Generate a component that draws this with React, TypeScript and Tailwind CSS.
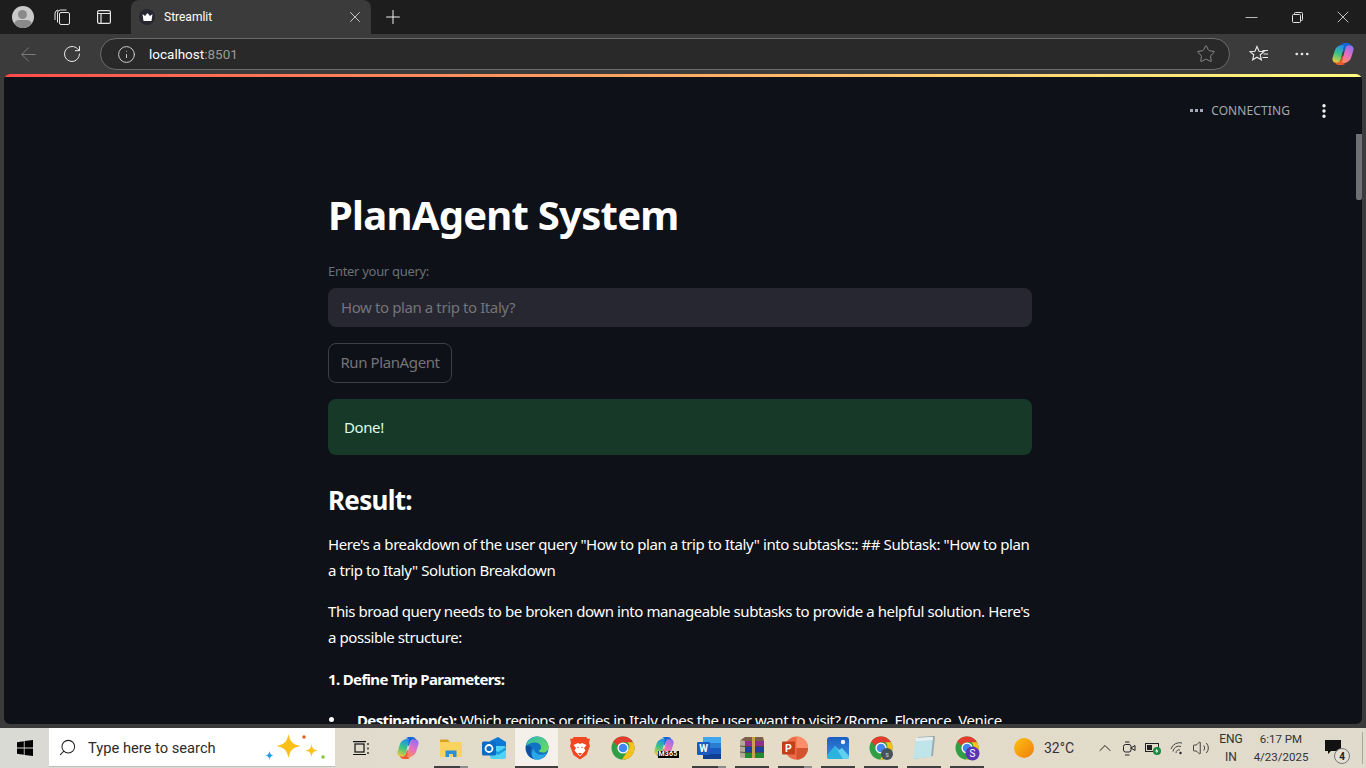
import { Info, RotateCw, ArrowLeft, Star, Plus, X, Minus, MoreHorizontal, MoreVertical, Search, ChevronUp, Volume2 } from 'lucide-react';

const sans = "font-['Noto_Sans',sans-serif]";

function ChromeIcon({ badge }: { badge?: 'gray' | 'purple' }) {
  return (
    <svg width="26" height="26" viewBox="-1 -1 26 26">
      <circle cx="12" cy="12" r="11.5" fill="#2f9e44" />
      <path d="M12 .5A11.5 11.5 0 0 1 22 6.3H12A5.8 5.8 0 0 0 6.6 10L2.3 5.6A11.500 11.500 0 0 1 12 .5Z" fill="#e33b2e" />
      <path d="M22 6.3A11.5 11.5 0 0 1 11 23.5L16.6 15A5.8 5.8 0 0 0 16.4 6.3Z" fill="#fbc116" />
      <circle cx="12" cy="12" r="5.6" fill="#fff" />
      <circle cx="12" cy="12" r="4.3" fill="#3f85f4" />
      {badge === 'gray' && (
        <>
          <circle cx="18" cy="18" r="6" fill="#46535c" />
          <text x="18" y="20.5" fontSize="7" fill="#d6d6d6" textAnchor="middle" fontFamily="Roboto, sans-serif">s</text>
        </>
      )}
      {badge === 'purple' && (
        <>
          <circle cx="17.500" cy="17.500" r="7" fill="#5b34b5" />
          <text x="17.500" y="21" fontSize="10" fill="#fff" textAnchor="middle" fontFamily="Roboto, sans-serif">S</text>
        </>
      )}
    </svg>
  );
}

function CopilotIcon({ size = 24 }: { size?: number }) {
  return (
    <svg width={size} height={size} viewBox="0 0 24 24">
      <defs>
        <linearGradient id="cpa" x1="0.6" y1="0" x2="0.3" y2="1">
          <stop offset="0" stopColor="#1f8fea" />
          <stop offset="0.5" stopColor="#3cc584" />
          <stop offset="1" stopColor="#f0c93a" />
        </linearGradient>
        <linearGradient id="cpb" x1="0.7" y1="0" x2="0.3" y2="1">
          <stop offset="0" stopColor="#8f6ff0" />
          <stop offset="0.55" stopColor="#e86fc0" />
          <stop offset="1" stopColor="#fb8a5c" />
        </linearGradient>
      </defs>
      <path d="M8.500 3.500C10 2.500 13 3 14 4c-1 1-1.300 2-1.700 3.500L9.500 18c-.5 2-1.500 3-3.500 3C3 21 1 19 1.500 16L4 8c.8-2.500 2.500-3.500 4.500-4.500Z" fill="url(#cpa)" />
      <path d="M15.500 20.500C14 21.500 11 21 10 20c1-1 1.300-2 1.700-3.500L14.500 6c.5-2 1.500-3 3.500-3 3 0 5 2 4.500 5L20 16c-.8 2.500-2.500 3.500-4.500 4.500Z" fill="url(#cpb)" />
      <path d="M9.500 2.500C10.500 1.500 12 1 14 1h2c2.500 0 4 1.500 4 3-1.500-1-3.500-1-4.500 0-1 1-1.500 2.500-2 4.500l-1.500 2c0-3 .5-5 1-6.500-1-1.500-2.500-2-4-1.500Z" fill="#1565d8" />
      <path d="M14.500 21.500c-1 1-2.500 1.500-4.500 1.500H8c-2.500 0-4-1.500-4-3 1.500 1 3.500 1 4.500 0 1-1 1.500-2.500 2-4.500l1.500-2c0 3-.5 5-1 6.500 1 1.500 2.500 2 4 1.500Z" fill="#ef5a2e" />
    </svg>
  );
}

function ExplorerIcon() {
  return (
    <svg width="24" height="24" viewBox="0 0 24 24">
      <path d="M1 4.500a1 1 0 0 1 1-1h7l2 3H1Z" fill="#d9a21b" />
      <rect x="1" y="6" width="22" height="15" rx="1" fill="#fbd35f" />
      <path d="M6.500 21v-6.500h11V21h-3.500v-3h-4v3Z" fill="#2b8fd8" />
    </svg>
  );
}

function OutlookIcon() {
  return (
    <svg width="24" height="24" viewBox="0 0 24 24">
      <path d="M8 5l8-4 8 5v5H8Z" fill="#0f78d4" />
      <rect x="8" y="10" width="16" height="13" rx="2" fill="#4fd3f5" />
      <path d="M8 11l8 5 8-5v3l-8 5-8-5Z" fill="#1b9de2" />
      <rect x="0" y="5.500" width="14" height="14" rx="1.500" fill="#0a6cc4" />
      <circle cx="7" cy="12.500" r="3.500" fill="none" stroke="#fff" strokeWidth="1.800" />
    </svg>
  );
}

function EdgeIcon() {
  return (
    <svg width="24" height="24" viewBox="0 0 24 24">
      <defs>
        <linearGradient id="edg" x1="0" y1="0" x2="1" y2="1">
          <stop offset="0" stopColor="#2fb8b0" />
          <stop offset="1" stopColor="#6fdc5b" />
        </linearGradient>
      </defs>
      <circle cx="12" cy="12" r="11.500" fill="#1273c4" />
      <path d="M1 10C2.500 4 7 .5 12 .5c6.500 0 11.500 5 11.500 10.500 0 3.500-2.500 5.500-5.500 5.500-2 0-4-.8-4.500-2 2-.5 3-2 2.500-4C15.500 7.500 12 6 9 6.500 5 7 2 8.500 1 10Z" fill="url(#edg)" />
      <path d="M9 12.500c0 3.500 3 6 6.500 6.200 2.500.2 4.500-.5 6-1.800-2 4-5.500 6.600-9.500 6.600-1.500 0-3-.5-3.500-1-2-2-2.500-6.500.5-10Z" fill="#2ba9e6" />
      <path d="M1 10C.5 16 3 21 8.500 22.500 5.500 20 5 15 7 11.500 5 9.500 2 9.500 1 10Z" fill="#0f4fa0" />
    </svg>
  );
}

function BraveIcon() {
  return (
    <svg width="22" height="24" viewBox="0 0 22 24">
      <path d="M5 1h12l2 2 2-.5L20 7l1 3-3.500 9L11 23.500 4.500 19 1 10l1-3L1 2.500 3 3Z" fill="#f1461f" />
      <path d="M4.500 9L9 7l2 1 2-1 4.500 2-2.500 3 1.500 2.500L11 20.500 5.500 14.500 7 12Z" fill="#fff" />
      <path d="M8 10.500l2 1-1 1ZM14 10.500l-2 1 1 1ZM9 17h4l-2 2.500Z" fill="#f1461f" />
    </svg>
  );
}

function M365Icon() {
  return (
    <div className="relative w-[26px] h-[24px]">
      <CopilotIcon size={22} />
      <span className="absolute right-0 top-[15px] bg-black text-white text-[7px] leading-[7px] font-['Roboto',sans-serif] font-bold px-[1px] tracking-[0.2px]">M365</span>
    </div>
  );
}

function WordIcon() {
  return (
    <svg width="24" height="24" viewBox="0 0 24 24">
      <rect x="6" y="1" width="18" height="22" rx="1.500" fill="#2b7cd3" />
      <rect x="6" y="1" width="18" height="6" fill="#41a5ee" />
      <rect x="6" y="12" width="18" height="6" fill="#185abd" />
      <rect x="6" y="18" width="18" height="5" fill="#103f91" />
      <rect x="0" y="6" width="13" height="13" rx="1" fill="#1a5cbe" />
      <text x="6.500" y="16" fontSize="10" fontWeight="700" fill="#fff" textAnchor="middle" fontFamily="Roboto, sans-serif">W</text>
    </svg>
  );
}

function RarIcon() {
  return (
    <svg width="24" height="24" viewBox="0 0 24 24">
      <path d="M0 4.500L5 1h18l1 4H5Z" fill="#7d5f49" />
      <path d="M5 5h19v5H5Z" fill="#8f2f8c" />
      <path d="M5 11h19v5H5Z" fill="#1f3f9e" />
      <path d="M5 17h19v5H5Z" fill="#1e8a32" />
      <path d="M0 4.500L5 5v5l-5-.5ZM0 10.500l5 .5v5l-5-.5ZM0 16.500l5 .5v5l-5-.5Z" fill="#b3aa98" />
      <path d="M0 10l5 .5h19M0 16l5 .5h19" stroke="#222" strokeWidth=".8" fill="none" />
      <rect x="12" y="1" width="3" height="21" fill="#c9a24f" />
    </svg>
  );
}

function PowerPointIcon() {
  return (
    <svg width="26" height="24" viewBox="0 0 26 24">
      <circle cx="14.500" cy="12" r="11.500" fill="#ed6c47" />
      <path d="M14.500.5A11.500 11.500 0 0 1 26 12H14.500Z" fill="#ff8f6b" />
      <path d="M14.500 12H26a11.500 11.500 0 0 1-11.500 11.500Z" fill="#d35230" />
      <rect x="0" y="5.500" width="13" height="13" rx="1" fill="#c43e1c" />
      <text x="6.500" y="15.500" fontSize="10.500" fontWeight="700" fill="#fff" textAnchor="middle" fontFamily="Roboto, sans-serif">P</text>
    </svg>
  );
}

function PhotosIcon() {
  return (
    <svg width="24" height="24" viewBox="0 0 24 24">
      <defs>
        <linearGradient id="pho" x1="0" y1="0" x2="0" y2="1">
          <stop offset="0" stopColor="#1a5fc0" />
          <stop offset="1" stopColor="#3a8fe6" />
        </linearGradient>
      </defs>
      <rect x="1" y="1" width="22" height="22" rx="3" fill="url(#pho)" />
      <circle cx="17" cy="6" r="2.200" fill="#f3f0ff" />
      <path d="M1 20l8-10 4 4 3-2 7 8v1a2 2 0 0 1-2 2H3a2 2 0 0 1-2-2Z" fill="#5fd0ee" />
      <path d="M9 10l8 13H3a2 2 0 0 1-2-2v-1Z" fill="#2bb3e0" />
    </svg>
  );
}

function NotepadIcon() {
  return (
    <svg width="26" height="26" viewBox="0 0 26 26">
      <path d="M7 2l17-1-2 20-19 3Z" fill="#9aa9ac" />
      <path d="M5 3l17-1-2 20-18 2Z" fill="#bfe4ea" />
      <path d="M5 3l17-1-.3 3-17 1Z" fill="#e9eff0" />
    </svg>
  );
}

function StartIcon() {
  return (
    <svg width="16" height="16" viewBox="0 0 16 16" fill="#000">
      <path d="M0 2.200 6.800 1.200v6.400H0ZM7.600 1.100 16 0v7.600H7.600ZM0 8.400h6.800v6.400L0 13.800ZM7.600 8.400H16V16l-8.400-1.100Z" />
    </svg>
  );
}

function Sparkles() {
  return (
    <svg width="62" height="30" viewBox="0 0 62 30">
      <path d="M24.500 2c1.500 7.500 4 10.500 12 12-8 1.500-10.500 4.500-12 12-1.500-7.500-4-10.500-12-12 8-1.500 10.500-4.500 12-12Z" fill="#fbbf1a" />
      <path d="M47.500 12c.8 4.500 1.800 5.500 6 6.500-4.200 1-5.200 2-6 6.500-.8-4.500-1.800-5.500-6-6.500 4.200-1 5.200-2 6-6.500Z" fill="#fcc21f" />
      <path d="M5.500 19c.5 3 1.300 3.800 4 4.500-2.700.7-3.500 1.500-4 4.500-.5-3-1.300-3.800-4-4.500 2.700-.7 3.500-1.500 4-4.500Z" fill="#2a9be8" />
      <circle cx="40" cy="5" r="1.800" fill="#e8622c" />
      <circle cx="59" cy="25" r="1.800" fill="#86c83c" />
    </svg>
  );
}

const apps = [
  { key: 'copilot', icon: <CopilotIcon /> },
  { key: 'explorer', icon: <ExplorerIcon />, bar: true, stack: true },
  { key: 'outlook', icon: <OutlookIcon /> },
  { key: 'edge', icon: <EdgeIcon />, active: true },
  { key: 'brave', icon: <BraveIcon /> },
  { key: 'chrome', icon: <ChromeIcon /> },
  { key: 'm365', icon: <M365Icon /> },
  { key: 'word', icon: <WordIcon />, bar: true, stack: true },
  { key: 'rar', icon: <RarIcon />, bar: true },
  { key: 'ppt', icon: <PowerPointIcon />, bar: true, stack: true },
  { key: 'photos', icon: <PhotosIcon />, bar: true },
  { key: 'chrome-s', icon: <ChromeIcon badge="gray" />, bar: true },
  { key: 'notepad', icon: <NotepadIcon />, bar: true },
  { key: 'chrome-p', icon: <ChromeIcon badge="purple" />, bar: true },
];

function BrowserChrome() {
  return (
    <>
      <div className="h-[34px] bg-[#1d1d1d] flex items-end shrink-0">
        <div className="w-[44px] h-full flex items-center justify-center pl-[1px]">
          <div className="w-[22px] h-[22px] rounded-full bg-[#c9c9c9] overflow-hidden flex flex-col items-center">
            <div className="w-[9px] h-[9px] rounded-full bg-[#8a8a8a] mt-[4px] shrink-0" />
            <div className="w-[18px] h-[10px] rounded-full bg-[#8a8a8a] mt-[1px] shrink-0" />
          </div>
        </div>
        <div className="w-[36px] h-full flex items-center justify-center">
          <svg width="16" height="16" viewBox="0 0 16 16" fill="none" stroke="#e6e6e6" strokeWidth="1">
            <rect x="5.500" y="3.500" width="10" height="12" rx="1.500" />
            <path d="M3.500 13.500V4a3 3 0 0 1 3-3h6M1 11V4a4 4 0 0 1 3-3" />
          </svg>
        </div>
        <div className="w-[48px] h-full flex items-center justify-center">
          <svg width="14" height="14" viewBox="0 0 14 14" fill="none" stroke="#e6e6e6" strokeWidth="1.200">
            <rect x=".6" y=".6" width="12.800" height="12.800" rx="1.500" />
            <path d="M.6 3.500h12.800M4 3.500v9.900" />
          </svg>
        </div>
        <div className="w-[240px] h-[34px] mt-auto ml-[3px] bg-[#3b3b3b] rounded-t-[8px] flex items-center pl-[8px] pr-[7px]">
          <div className="w-[16px] h-[16px] rounded-full bg-[#262730] flex items-center justify-center shrink-0">
            <svg width="11" height="8" viewBox="0 0 10 8" fill="#fff">
              <path d="M0 1l2.500 2L5 0l2.500 3L10 1 9 8H1Z" />
            </svg>
          </div>
          <span className="ml-[9px] text-[12px] text-white font-['Roboto',sans-serif] flex-1">Streamlit</span>
          <X size={18} color="#e5e5e5" strokeWidth={1.100} />
        </div>
        <div className="w-[36px] h-full flex items-center justify-center ml-[4px]">
          <Plus size={22} color="#f0f0f0" strokeWidth={1.100} />
        </div>
        <div className="flex-1" />
        <div className="w-[46px] h-full flex items-center justify-center"><Minus size={19} color="#e5e5e5" strokeWidth={1} /></div>
        <div className="w-[46px] h-full flex items-center justify-center">
          <svg width="11" height="11" viewBox="0 0 11 11" fill="none" stroke="#e5e5e5">
            <rect x=".5" y="2.500" width="8" height="8" rx="1" />
            <path d="M2.500 2.500V1.500a1 1 0 0 1 1-1h6a1 1 0 0 1 1 1v6a1 1 0 0 1-1 1H8.500" />
          </svg>
        </div>
        <div className="w-[46px] h-full flex items-center justify-center"><X size={20} color="#e5e5e5" strokeWidth={1} /></div>
      </div>
      <div className="h-[40px] bg-[#3b3b3b] flex items-center shrink-0">
        <div className="w-[56px] flex justify-center"><ArrowLeft size={23} color="#7d7d7d" strokeWidth={1} /></div>
        <div className="w-[32px] flex justify-center"><RotateCw size={20} color="#e8e8e8" strokeWidth={1.200} /></div>
        <div className="ml-[12px] w-[1130px] h-[32px] rounded-full bg-[#292929] border border-[#6b6b6b] flex items-center pl-[16px] pr-[13px]">
          <Info size={19} color="#e2e2e2" strokeWidth={1.100} />
          <span className="ml-[13px] text-[13.5px] font-['Roboto',sans-serif] text-white flex-1">
            localhost<span className="text-[#9b9b9b]">:8501</span>
          </span>
          <Star size={20} color="#8f8f8f" strokeWidth={1.100} />
        </div>
        <div className="ml-[19px] w-[20px] flex justify-center">
          <svg width="20" height="18" viewBox="0 0 20 18" fill="none" stroke="#ececec" strokeWidth="1.100">
            <path d="M8 1.500l2 4.700 5 .4-3.800 3.200 1.200 5L8 12.200 3.600 14.800l1.200-5L1 6.600l5-.4Z" />
            <path d="M13.500 5.500H19M14.500 9H19M13.500 12.500H19" />
          </svg>
        </div>
        <div className="ml-[23px] w-[20px] flex justify-center"><MoreHorizontal size={18} color="#ececec" strokeWidth={1.600} /></div>
        <div className="ml-[19px] w-[24px] flex justify-center"><CopilotIcon size={24} /></div>
      </div>
    </>
  );
}

function StreamlitPage() {
  return (
    <div className={`flex-1 min-h-0 bg-[#3b3b3b] px-[4px] pb-[4px] ${sans}`}>
      <div className="h-full bg-[#0e1117] rounded-[6px] overflow-hidden relative">
        <div className="h-[3px] bg-gradient-to-r from-[#ff4b4b] to-[#fffd80]" />
        <div className="h-[67px] flex items-center justify-end pr-[29px]">
          <div className="flex gap-[2px]">
            <div className="w-[3px] h-[3px] bg-[#a3a8b4]" />
            <div className="w-[3px] h-[3px] bg-[#a3a8b4]" />
            <div className="w-[3px] h-[3px] bg-[#a3a8b4]" />
          </div>
          <span className="ml-[8px] text-[12px] tracking-[0.1px] text-[#a3a8b4]">CONNECTING</span>
          <MoreVertical size={18} color="#fafafa" strokeWidth={2.500} className="ml-[25px]" />
        </div>
        <div className="w-[704px] ml-[324px] text-white">
          <h1 className="text-[40px] leading-[54px] font-bold tracking-[-0.75px] mt-[44px]">PlanAgent System</h1>
          <div className="text-[13px] leading-[18px] text-[#6d6f76] mt-[20px] tracking-[-0.3px]">Enter your query:</div>
          <div className="mt-[8px] h-[39px] bg-[#262730] rounded-[8px] flex items-center px-[13px] text-[15px] tracking-[-0.4px] text-[#737479]">How to plan a trip to Italy?</div>
          <div className="mt-[16px] h-[40px] w-[124px] border border-[#3d3f47] rounded-[8px] flex items-center justify-center pb-[2px] text-[15px] tracking-[-0.4px] text-[#737479]">Run PlanAgent</div>
          <div className="mt-[16px] h-[56px] bg-[#173928] rounded-[8px] flex items-center px-[16px] text-[15px] tracking-[-0.4px] text-[#dffde9]">Done!</div>
          <h3 className="mt-[27px] text-[26px] leading-[36px] font-bold tracking-[-0.7px]">Result:</h3>
          <p className="mt-[13px] text-[15px] leading-[26px] tracking-[-0.42px]">Here's a breakdown of the user query "How to plan a trip to Italy" into subtasks:: ## Subtask: "How to plan a trip to Italy" Solution Breakdown</p>
          <p className="mt-[15px] text-[15px] leading-[26px] tracking-[-0.42px]">This broad query needs to be broken down into manageable subtasks to provide a helpful solution. Here's a possible structure:</p>
          <p className="mt-[16px] text-[15px] leading-[26px] tracking-[-0.65px] font-bold">1. Define Trip Parameters:</p>
          <ul className="mt-[15px] text-[15px] leading-[26px] tracking-[-0.42px]">
            <li className="flex">
              <span className="w-[29px] shrink-0 pt-[10px] pl-[1px]"><span className="block w-[5px] h-[5px] rounded-full bg-white" /></span>
              <span><b className="tracking-[-0.65px]">Destination(s):</b> Which regions or cities in Italy does the user want to visit? (Rome, Florence, Venice,</span>
            </li>
          </ul>
        </div>
        <div className="absolute right-0 top-[60px] w-[6px] h-[66px] rounded-b-[2px] bg-[#6e7075]" />
      </div>
    </div>
  );
}

function Taskbar() {
  return (
    <div className="h-[40px] shrink-0 bg-gradient-to-r from-[#d9dad4] via-[#e6dcc6] to-[#dfdbcd] flex items-stretch font-['Roboto',sans-serif] text-[#1c1c1c]">
      <div className="w-[49px] shrink-0 flex items-center justify-center"><StartIcon /></div>
      <div className="w-[286px] h-[39px] shrink-0 bg-white border-b border-[#bdbdbd] flex items-center pl-[9px] pr-[9px]">
        <Search size={19} color="#222" strokeWidth={1.300} className="-scale-x-100" />
        <span className="ml-[11px] mt-[3px] text-[14.7px] text-[#2c2c2c] flex-1">Type here to search</span>
        <Sparkles />
      </div>
      <div className="w-[51px] shrink-0 flex items-center justify-center">
        <svg width="16" height="15" viewBox="0 0 16 15" fill="none" stroke="#111" strokeWidth="1.200">
          <rect x="2" y="3" width="9" height="8" />
          <path d="M0 .7h13M0 13.500h13" />
          <path d="M15 2v2M15 6.500v2M15 11v2" />
        </svg>
      </div>
      {apps.map((app) => (
        <div key={app.key} className={`relative w-[43px] shrink-0 flex items-center justify-center ${app.active ? 'bg-[#f5f1ea]' : ''}`}>
          {app.icon}
          {app.active && <div className="absolute bottom-0 left-0 w-full h-[2px] bg-[#3f3f3f]" />}
          {app.bar && (
            <div className="absolute bottom-0 left-[5px] w-[34px] h-[2px] flex">
              <div className="flex-1 bg-[#3f3f3f]" />
              {app.stack && <div className="w-[8px] bg-[#8c8c8c]" />}
            </div>
          )}
        </div>
      ))}
      <div className="ml-[24px] w-[24px] shrink-0 flex items-center justify-center">
        <div className="w-[20px] h-[20px] rounded-full bg-gradient-to-br from-[#fcc10f] to-[#ee7c0e]" />
      </div>
      <span className="ml-[8px] self-center text-[14px] text-[#333] w-[38px] shrink-0">32°C</span>
      <div className="ml-[13px] w-[20px] shrink-0 flex items-center justify-center"><ChevronUp size={20} color="#222" strokeWidth={1.200} /></div>
      <div className="ml-[2px] w-[24px] shrink-0 flex items-center justify-center">
        <svg width="13" height="15" viewBox="0 0 13 15" fill="none" stroke="#222">
          <rect x=".5" y="3.500" width="7.500" height="7.500" rx="2" />
          <path d="M8 7l4-2.500v5L8 7ZM2 1h4.500M2 14h4.500" />
        </svg>
      </div>
      <div className="w-[24px] shrink-0 flex items-center justify-center">
        <svg width="17" height="13" viewBox="0 0 17 13">
          <rect x=".5" y="1.500" width="13" height="8" fill="none" stroke="#222" />
          <rect x="2" y="3" width="5" height="5" fill="#222" />
          <circle cx="12" cy="9" r="4" fill="#178a3d" />
          <path d="M12 6.500l-2 3h1.500v2l2-3H12Z" fill="#fff" />
        </svg>
      </div>
      <div className="w-[25px] shrink-0 flex items-center justify-center">
        <svg width="15" height="13" viewBox="0 0 15 13" fill="none" stroke="#444" strokeWidth="1">
          <path d="M1 7a9 9 0 0 1 11-6M3 9.500a6 6 0 0 1 8-5M6 11a3 3 0 0 1 4-3" />
          <circle cx="10.500" cy="11" r="1.200" fill="#222" stroke="none" />
        </svg>
      </div>
      <div className="w-[22px] shrink-0 flex items-center justify-center"><Volume2 size={18} color="#222" strokeWidth={1.100} /></div>
      <div className="w-[38px] shrink-0 flex flex-col items-center justify-center text-[12px] leading-[18px] text-[#333]">
        <span>ENG</span>
        <span>IN</span>
      </div>
      <div className="w-[62px] shrink-0 flex flex-col items-center justify-center text-[11.5px] leading-[18px] text-[#333]">
        <span>6:17 PM</span>
        <span>4/23/2025</span>
      </div>
      <div className="relative ml-[3px] w-[36px] shrink-0 flex items-center justify-center">
        <svg width="16" height="16" viewBox="0 0 16 16" fill="#111" className="-mt-[3px]">
          <path d="M0 1h16v11H6l-3 3v-3H0Z" />
        </svg>
        <div className="absolute left-[19px] top-[20px] w-[16px] h-[16px] rounded-full border border-[#777] bg-[#e4e0d4] flex items-center justify-center text-[10px] font-bold text-[#222]">4</div>
      </div>
      <div className="ml-[11px] w-px my-[4px] bg-[#a8a69c]" />
    </div>
  );
}

export default function App() {
  return (
    <div className="w-[1366px] h-[768px] overflow-hidden flex flex-col bg-[#3b3b3b]">
      <BrowserChrome />
      <StreamlitPage />
      <Taskbar />
    </div>
  );
}
